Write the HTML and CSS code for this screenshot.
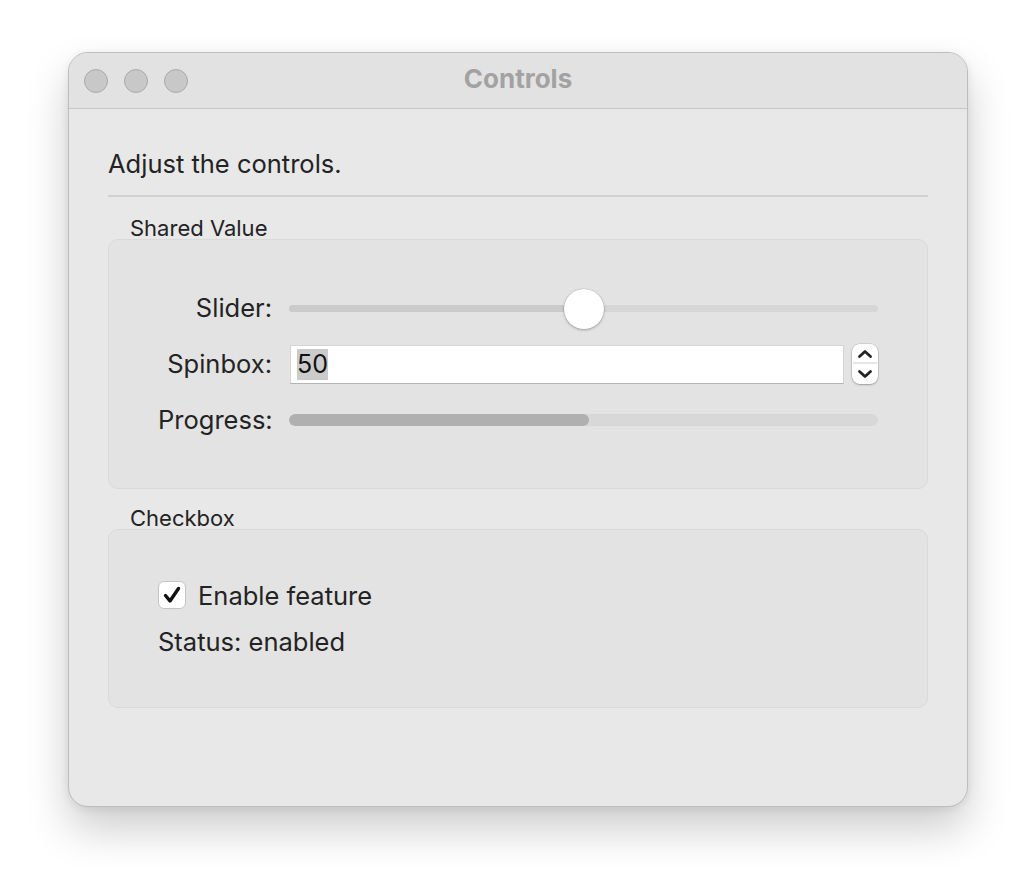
FILE: index.html
```html
<!DOCTYPE html>
<html lang="en">
<head>
    <meta charset="UTF-8">
    <title>Controls</title>
    <link rel="stylesheet" href="styles.css">
</head>
<body>
    <div class="window">
        <div class="titlebar">
            <div class="lights">
                <span class="light"></span>
                <span class="light"></span>
                <span class="light"></span>
            </div>
            <div class="title">Controls</div>
            <div></div>
        </div>
        <div class="content">
            <div class="intro">Adjust the controls.</div>
            <div class="separator"></div>

            <div class="group-label">Shared Value</div>
            <div class="group shared">
                <div class="row-label">Slider:</div>
                <div class="slider">
                    <div class="slider-fill"></div>
                    <div class="knob"></div>
                </div>

                <div class="row-label">Spinbox:</div>
                <div class="spinbox">
                    <div class="spin-input"><span class="sel">50</span></div>
                    <div class="spin-buttons">
                        <svg width="26" height="40" viewBox="0 0 26 40">
                            <path d="M7.5 12.5 L13 7.5 L18.5 12.5" fill="none" stroke="#222" stroke-width="2.8" stroke-linecap="round" stroke-linejoin="round"/>
                            <line x1="1" y1="19" x2="25" y2="19" stroke="#dcdcdc" stroke-width="1.5"/>
                            <path d="M7.5 27.5 L13 32.5 L18.5 27.5" fill="none" stroke="#222" stroke-width="2.8" stroke-linecap="round" stroke-linejoin="round"/>
                        </svg>
                    </div>
                </div>

                <div class="row-label">Progress:</div>
                <div class="progress">
                    <div class="progress-fill" style="width: 51%"></div>
                </div>
            </div>

            <div class="group-label second">Checkbox</div>
            <div class="group checks">
                <label class="check-row">
                    <span class="checkbox">
                        <svg width="20" height="20" viewBox="0 0 20 20">
                            <path d="M3.5 10.5 L8 16 L16.5 3.5" fill="none" stroke="#111" stroke-width="3.4" stroke-linecap="round" stroke-linejoin="round"/>
                        </svg>
                    </span>
                    <span>Enable feature</span>
                </label>
                <div class="status">Status: enabled</div>
            </div>
        </div>
    </div>
</body>
</html>
```

FILE: styles.css
```css
* { box-sizing: border-box; }
html, body { min-height: 100vh; }
body {
    margin: 0;
    background: #fff;
    font-family: 'Inter', 'Liberation Sans', sans-serif;
    color: #232323;
    padding: 52px 0 80px 68px;
}
.window {
    width: 900px;
    height: 755px;
    background: #e8e8e8;
    border: 1px solid #bdbdbd;
    border-radius: 20px;
    overflow: hidden;
    box-shadow: 0 22px 44px rgba(0, 0, 0, 0.20), 0 2px 8px rgba(0, 0, 0, 0.08);
}
.titlebar {
    height: 56px;
    background: #e2e2e2;
    border-bottom: 1px solid #c6c6c6;
    display: grid;
    grid-template-columns: 1fr auto 1fr;
    align-items: center;
}
.lights {
    display: flex;
    gap: 16px;
    padding-left: 15px;
}
.light {
    width: 24px;
    height: 24px;
    border-radius: 50%;
    background: #c8c8c8;
    border: 1px solid #aaaaaa;
}
.title {
    font-weight: 700;
    font-size: 26px;
    line-height: 30px;
    margin-top: -4px;
    color: #a2a2a2;
}
.content {
    padding: 41px 39px 0 39px;
}
.intro {
    font-size: 25.5px;
    line-height: 28px;
}
.separator {
    height: 2px;
    background: #d0d0d0;
    margin-top: 17px;
}
.group-label {
    font-size: 22px;
    line-height: 22px;
    padding-left: 22px;
    margin-top: 20px;
}
.group-label.second {
    margin-top: 18px;
}
.group {
    background: #e3e3e3;
    border: 1px solid #dadada;
    border-radius: 10px;
}
.shared {
    height: 250px;
    display: grid;
    grid-template-columns: 114px 1fr;
    grid-auto-rows: 40px;
    row-gap: 16px;
    column-gap: 17px;
    align-items: center;
    padding: 48px 49px 0 49px;
}
.row-label {
    font-size: 25.5px;
    line-height: 30px;
    text-align: right;
    white-space: nowrap;
    margin-top: -1px;
}
.slider {
    position: relative;
    height: 7px;
    border-radius: 4px;
    background: #d6d6d6;
    margin-top: 1px;
}
.slider-fill {
    width: 50%;
    height: 100%;
    border-radius: 4px;
    background: #cbcbcb;
}
.knob {
    position: absolute;
    left: 50%;
    top: 50%;
    width: 40px;
    height: 40px;
    margin: -20px 0 0 -20px;
    border-radius: 50%;
    background: #fff;
    box-shadow: 0 1px 3px rgba(0, 0, 0, 0.28), 0 0 0 0.5px rgba(0, 0, 0, 0.12);
}
.spinbox {
    display: flex;
    align-items: center;
    gap: 8px;
}
.spin-input {
    flex: 1;
    height: 39px;
    margin-left: 1px;
    background: #fff;
    border: 1px solid #d4d4d4;
    border-bottom-color: #b4b4b4;
    display: flex;
    align-items: center;
    padding-left: 6px;
    font-size: 25px;
}
.sel {
    background: #cbcbcb;
    color: #111;
    line-height: 31px;
}
.spin-buttons {
    width: 26px;
    height: 40px;
    background: #fff;
    border-radius: 8px;
    box-shadow: 0 1px 2px rgba(0, 0, 0, 0.25), 0 0 0 0.5px rgba(0, 0, 0, 0.15);
}
.spin-buttons svg { display: block; }
.progress {
    height: 12px;
    border-radius: 6px;
    background: #d8d8d8;
    overflow: hidden;
}
.progress-fill {
    height: 100%;
    border-radius: 6px;
    background: #b0b0b0;
}
.checks {
    height: 179px;
    padding: 51px 49px 0 49px;
    font-size: 25.5px;
}
.check-row {
    display: flex;
    align-items: center;
    gap: 12px;
    height: 28px;
}
.checkbox {
    width: 28px;
    height: 28px;
    background: #fff;
    border: 1px solid #c4c4c4;
    border-radius: 6px;
    display: flex;
    align-items: center;
    justify-content: center;
}
.checkbox svg { display: block; }
.status {
    margin-top: 21px;
    line-height: 24px;
}
```
